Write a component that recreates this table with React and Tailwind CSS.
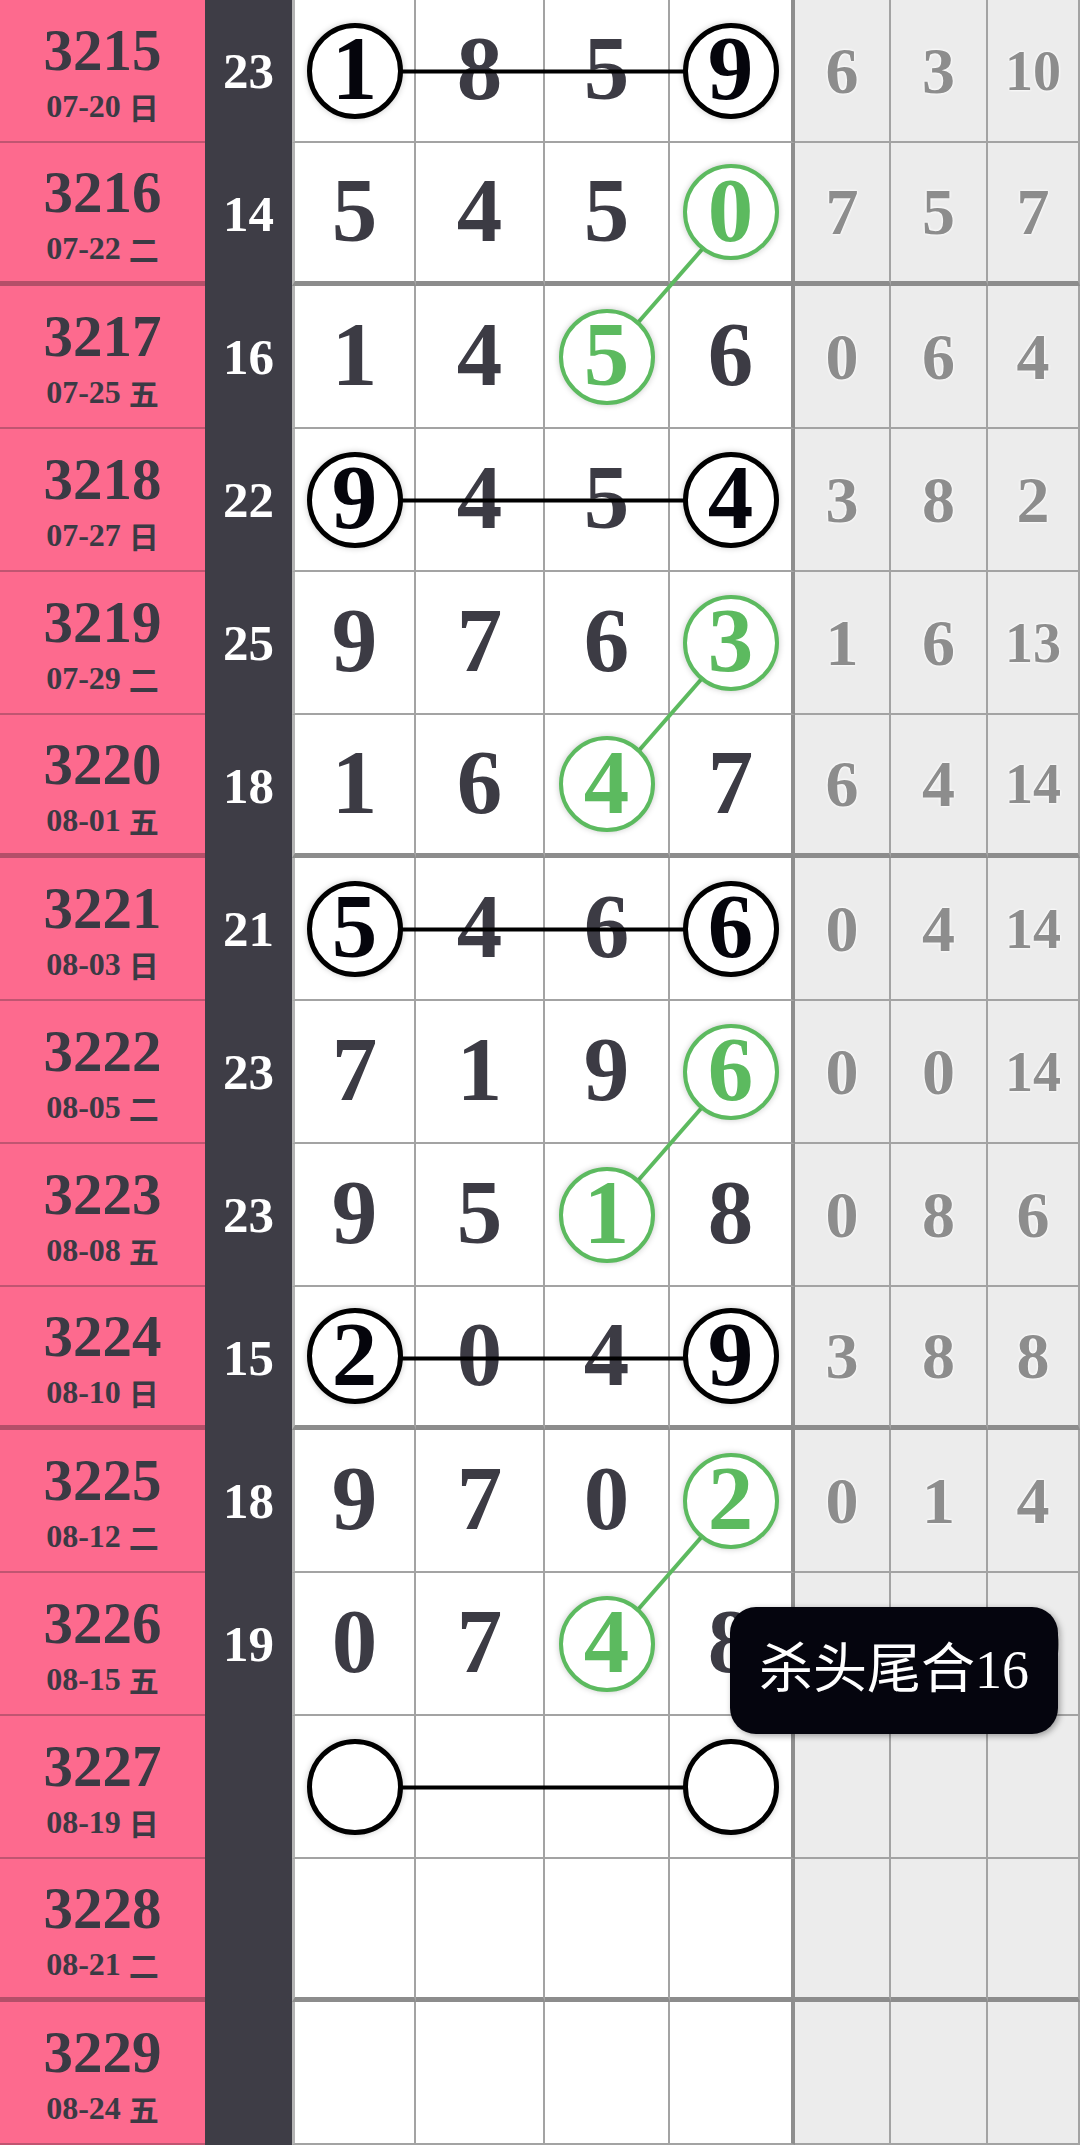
import React from 'react';

const ROWS = [
  { no: 3215, date: '07-20', wd: '日', sum: 23, d: [1, 8, 5, 9], g: [6, 3, 10], mark: 'pair' },
  { no: 3216, date: '07-22', wd: '二', sum: 14, d: [5, 4, 5, 0], g: [7, 5, 7], mark: 'tail' },
  { no: 3217, date: '07-25', wd: '五', sum: 16, d: [1, 4, 5, 6], g: [0, 6, 4], mark: 'head' },
  { no: 3218, date: '07-27', wd: '日', sum: 22, d: [9, 4, 5, 4], g: [3, 8, 2], mark: 'pair' },
  { no: 3219, date: '07-29', wd: '二', sum: 25, d: [9, 7, 6, 3], g: [1, 6, 13], mark: 'tail' },
  { no: 3220, date: '08-01', wd: '五', sum: 18, d: [1, 6, 4, 7], g: [6, 4, 14], mark: 'head' },
  { no: 3221, date: '08-03', wd: '日', sum: 21, d: [5, 4, 6, 6], g: [0, 4, 14], mark: 'pair' },
  { no: 3222, date: '08-05', wd: '二', sum: 23, d: [7, 1, 9, 6], g: [0, 0, 14], mark: 'tail' },
  { no: 3223, date: '08-08', wd: '五', sum: 23, d: [9, 5, 1, 8], g: [0, 8, 6], mark: 'head' },
  { no: 3224, date: '08-10', wd: '日', sum: 15, d: [2, 0, 4, 9], g: [3, 8, 8], mark: 'pair' },
  { no: 3225, date: '08-12', wd: '二', sum: 18, d: [9, 7, 0, 2], g: [0, 1, 4], mark: 'tail' },
  // 气泡盖住了前两列, 只露出最后一个数的边
  { no: 3226, date: '08-15', wd: '五', sum: 19, d: [0, 7, 4, 8], g: [undefined, undefined, 10], mark: 'head' },
  { no: 3227, date: '08-19', wd: '日', sum: null, d: [], g: [], mark: 'pair' },
  { no: 3228, date: '08-21', wd: '二', sum: null, d: [], g: [], mark: null },
  { no: 3229, date: '08-24', wd: '五', sum: null, d: [], g: [], mark: null },
];

const ROW_H = 143;
// centres of the four digit columns
const CX = [354, 480.5, 607.5, 732.5];
const DIGIT_W = ['w-[124px] border-l-[3px] border-l-[#b4b4b4]', 'w-[129px]', 'w-[125px]', 'w-[125px] border-r-[4px] border-r-[#8e8e8e]'];
const GRAY_W = ['w-[96px]', 'w-[97px]', 'w-[92px]'];

function Circle({ green, children }) {
  return (
    <div
      className={[
        'relative z-20 w-[96px] h-[96px] rounded-full bg-white flex items-center justify-center',
        'shadow-[0_0_6px_rgba(0,0,0,0.22)]',
        green ? 'border-[4px] border-[#5cba5f] text-[#5cba5f]' : 'border-[5px] border-black text-[#05050c]',
      ].join(' ')}
    >
      <span className="leading-none -mt-[4px]">{children}</span>
    </div>
  );
}

function circleAt(row, col) {
  if (row.mark === 'pair') return col === 0 || col === 3 ? 'black' : null;
  if (row.mark === 'tail') return col === 3 ? 'green' : null;
  if (row.mark === 'head') return col === 2 ? 'green' : null;
  return null;
}

function Row({ row }) {
  const thick = row.no % 4 === 0;
  const cellB = thick ? 'border-b-[5px] border-b-[#8c8c8c]' : 'border-b-2 border-b-[#a3a3a3]';
  return (
    <div className="flex h-[143px]">
      <div
        className={[
          'w-[205px] bg-[#fd6a8e] flex flex-col items-center justify-center text-[#3b3a44] font-bold',
          thick ? 'border-b-[5px] border-b-[#b44f69]' : 'border-b-2 border-b-[#c05571]',
        ].join(' ')}
      >
        <div className="text-[59px] leading-none mt-[2px]">{row.no}</div>
        <div className="text-[32px] leading-none mt-[10px] flex items-center">
          {row.date}
          <span className="ml-[8px] font-['Noto_Sans_CJK_SC',sans-serif] text-[30px]">{row.wd}</span>
        </div>
      </div>
      <div className="w-[87px] bg-[#3e3d46] flex items-center justify-center text-white font-bold text-[51px] leading-none">
        {row.sum}
      </div>
      {[0, 1, 2, 3].map((c) => {
        const kind = circleAt(row, c);
        const v = row.d[c];
        return (
          <div
            key={c}
            className={[DIGIT_W[c], 'bg-white flex items-center justify-center font-bold text-[91px] text-[#3c3b44]', c < 3 ? 'border-r-2 border-r-[#a3a3a3]' : '', cellB].join(' ')}
          >
            {kind ? <Circle green={kind === 'green'}>{v}</Circle> : <span className="leading-none -mt-[4px]">{v}</span>}
          </div>
        );
      })}
      {[0, 1, 2].map((c) => {
        const v = row.g[c];
        const two = v !== undefined && v >= 10;
        return (
          <div
            key={c}
            className={[GRAY_W[c], 'bg-[#ececec] flex items-center justify-center font-bold text-[#8d8d8d] [text-shadow:0_0_3px_#fff,0_0_3px_#fff] border-r-2 border-r-[#a3a3a3]', two ? 'text-[56px]' : 'text-[66px]', cellB].join(' ')}
          >
            <span className="leading-none">{v}</span>
          </div>
        );
      })}
    </div>
  );
}

function Lines() {
  const segs = [];
  ROWS.forEach((row, i) => {
    const y = i * ROW_H + 71.5;
    if (row.mark === 'pair') {
      segs.push(<line key={'p' + i} x1={CX[0]} y1={y} x2={CX[3]} y2={y} stroke="#000" strokeWidth="4" />);
    }
    if (row.mark === 'tail') {
      segs.push(<line key={'t' + i} x1={CX[3]} y1={y} x2={CX[2]} y2={y + ROW_H} stroke="#5cba5f" strokeWidth="4" />);
    }
  });
  return (
    <svg className="absolute left-0 top-0 z-10 pointer-events-none" width="1080" height={ROWS.length * ROW_H}>
      {segs}
    </svg>
  );
}

export default function App() {
  return (
    <div className="relative w-[1080px] h-[2146px] overflow-hidden bg-white font-['Liberation_Serif','Noto_Sans_CJK_SC',serif]">
      {ROWS.map((r) => (
        <Row key={r.no} row={r} />
      ))}
      <Lines />
      {/* 提示气泡 */}
      <div className="absolute left-[730px] top-[1607px] z-30 w-[328px] h-[127px] rounded-[26px] bg-[#05050e] text-white text-[54px] flex items-center justify-center shadow-[2px_2px_6px_rgba(0,0,0,0.35)]">
        杀头尾合16
      </div>
    </div>
  );
}
